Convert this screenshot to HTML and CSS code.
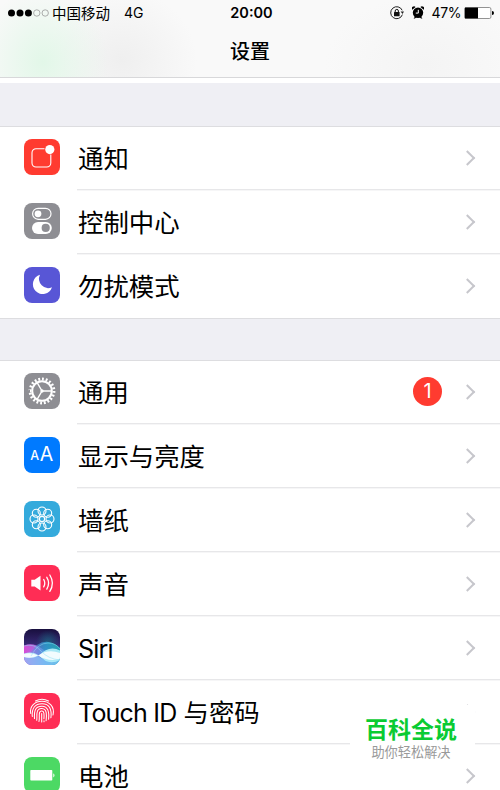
FILE: index.html
```html
<!DOCTYPE html>
<html lang="zh-CN">
<head>
  <meta charset="UTF-8">
  <title>设置</title>
  <link rel="stylesheet" href="styles.css">
</head>
<body>

  <header class="header">
    <div class="status">
      <div class="status-left">
        <svg class="signal" width="42" height="10" viewBox="0 0 42 10">
          <circle cx="3.5" cy="5" r="3.5"/>
          <circle cx="12" cy="5" r="3.5"/>
          <circle cx="20.4" cy="5" r="3.5"/>
          <circle class="off" cx="28.8" cy="5" r="3.2"/>
          <circle class="off" cx="37.2" cy="5" r="3.2"/>
        </svg>
        <span class="carrier">中国移动</span>
        <span>4G</span>
      </div>
      <div class="clock">20:00</div>
      <div class="status-right">
        <svg width="14" height="14" viewBox="0 0 14 14">
          <path d="M12.2 4.3A6 6 0 1 0 12.4 8.6" fill="none" stroke="#222" stroke-width="1"/>
          <path d="M10.6 5.6h3.4l-1.5 2.4z" fill="#222"/>
          <rect x="4" y="6" width="5.6" height="4.3" rx=".5" fill="#111"/>
          <path d="M5.2 6.2V5a1.6 1.6 0 0 1 3.2 0v1.2" fill="none" stroke="#111" stroke-width="1"/>
        </svg>
        <svg class="alarm" width="12" height="13" viewBox="0 0 12 13">
          <circle cx="6" cy="6.8" r="5.2"/>
          <path d="M.3 3.8A2.2 2.2 0 0 1 3.6.9zM11.7 3.8A2.2 2.2 0 0 0 8.4.9zM1.6 12.6l1.5-2.2 1.2.8-1.3 1.4zM10.4 12.6l-1.5-2.2-1.2.8L9 12.6z"/>
          <path d="M6.3 3.8v3.3H3.8" fill="none" stroke="#fff" stroke-width="1"/>
        </svg>
        <span class="percent">47%</span>
        <svg width="30" height="12" viewBox="0 0 30 12">
          <rect x=".5" y=".5" width="26.4" height="11" rx="1.5" fill="#fff" stroke="#777" stroke-width=".8"/>
          <path d="M1 .6h13v10.8H1z"/>
          <path d="M28 4a2 2 0 0 1 0 4z"/>
        </svg>
      </div>
    </div>
    <h1>设置</h1>
  </header>

  <ul class="group">
    <li class="row">
      <svg class="icon" viewBox="0 0 36 36">
        <rect width="36" height="36" rx="8" fill="#ff3b30"/>
        <path d="M20.5 9.7H12a4 4 0 0 0-4 4V24a4 4 0 0 0 4 4h10.8a4 4 0 0 0 4-4v-8.5" fill="none" stroke="#fff" stroke-width="1.1"/>
        <circle cx="25.8" cy="10.6" r="4.6" fill="#fff"/>
      </svg>
      <div class="cell"><span class="label">通知</span><i class="chevron"></i></div>
    </li>
    <li class="row">
      <svg class="icon" viewBox="0 0 36 36">
        <rect width="36" height="36" rx="8" fill="#8e8e93"/>
        <rect x="8.6" y="5.3" width="18.4" height="11" rx="5.5" fill="none" stroke="#fff" stroke-width="1.2"/>
        <circle cx="14" cy="10.8" r="3.4" fill="#fff"/>
        <rect x="8" y="18.9" width="19.8" height="12" rx="6" fill="#fff"/>
        <circle cx="21.7" cy="24.9" r="4.1" fill="#8e8e93"/>
      </svg>
      <div class="cell"><span class="label">控制中心</span><i class="chevron"></i></div>
    </li>
    <li class="row">
      <svg class="icon" viewBox="0 0 36 36">
        <rect width="36" height="36" rx="8" fill="#5856d6"/>
        <path d="M16 7.8A9.8 9.8 0 1 0 28 20.2 9.2 9.2 0 0 1 16 7.8z" fill="#fff"/>
      </svg>
      <div class="cell"><span class="label">勿扰模式</span><i class="chevron"></i></div>
    </li>
  </ul>

  <ul class="group">
    <li class="row">
      <svg class="icon" viewBox="0 0 36 36">
        <rect width="36" height="36" rx="8" fill="#8e8e93"/>
        <g fill="none" stroke="#fff">
          <circle cx="18" cy="18" r="9.8" stroke-width="2"/>
          <circle cx="18" cy="18" r="12" stroke-width="2.8" pathLength="40" stroke-dasharray="1 1"/>
          <path d="M18 18h10M18 18l-5-8.6M18 18l-5 8.6" stroke-width="1.4"/>
        </g>
        <circle cx="18" cy="18" r="1.7" fill="#fff"/>
      </svg>
      <div class="cell"><span class="label">通用</span><span class="badge">1</span><i class="chevron"></i></div>
    </li>
    <li class="row">
      <svg class="icon" viewBox="0 0 36 36">
        <rect width="36" height="36" rx="8" fill="#007aff"/>
        <text class="aa small" x="6.2" y="23.4" font-size="12.5">A</text>
        <text class="aa" x="15.8" y="24.4" font-size="19.5">A</text>
      </svg>
      <div class="cell"><span class="label">显示与亮度</span><i class="chevron"></i></div>
    </li>
    <li class="row">
      <svg class="icon" viewBox="0 0 36 36">
        <rect width="36" height="36" rx="8" fill="#34aadc"/>
        <g fill="none" stroke="#fff" stroke-width="1.1">
          <circle cx="18" cy="10" r="4"/>
          <circle cx="23.7" cy="12.3" r="4"/>
          <circle cx="26" cy="18" r="4"/>
          <circle cx="23.7" cy="23.7" r="4"/>
          <circle cx="18" cy="26" r="4"/>
          <circle cx="12.3" cy="23.7" r="4"/>
          <circle cx="10" cy="18" r="4"/>
          <circle cx="12.3" cy="12.3" r="4"/>
          <circle cx="18" cy="18" r="2.6"/>
        </g>
      </svg>
      <div class="cell"><span class="label">墙纸</span><i class="chevron"></i></div>
    </li>
    <li class="row">
      <svg class="icon" viewBox="0 0 36 36">
        <rect width="36" height="36" rx="8" fill="#ff2d55"/>
        <path d="M7.3 14.7h3.4l5.8-4v14.800l-5.800-4H7.300z" fill="#fff"/>
        <g fill="none" stroke="#fff" stroke-width="1.3" stroke-linecap="round">
          <path d="M19.7 14.5q2.2 3.7 0 7.4"/>
          <path d="M22.8 12.3q3.600 5.900 0 11.800"/>
          <path d="M25.800 10q5.200 8.200 0 16.400"/>
        </g>
      </svg>
      <div class="cell"><span class="label">声音</span><i class="chevron"></i></div>
    </li>
    <li class="row">
      <svg class="icon" viewBox="0 0 36 36">
        <defs>
          <linearGradient id="night" x1="0" y1="0" x2="0" y2="1">
            <stop offset="0" stop-color="#180f3e"/>
            <stop offset=".4" stop-color="#34266f"/>
            <stop offset=".7" stop-color="#4b67bd"/>
            <stop offset="1" stop-color="#5b9de4"/>
          </linearGradient>
          <linearGradient id="waveLeft" x1="0" y1="0" x2="1" y2="0">
            <stop offset="0" stop-color="#d84bd6"/>
            <stop offset=".6" stop-color="#9b8cf0" stop-opacity=".8"/>
            <stop offset="1" stop-color="#3f83dc" stop-opacity=".6"/>
          </linearGradient>
          <linearGradient id="waveRight" x1="0" y1="0" x2="1" y2="0">
            <stop offset="0" stop-color="#8f7fe8" stop-opacity=".5"/>
            <stop offset=".6" stop-color="#31a5dc"/>
            <stop offset="1" stop-color="#22c4bd"/>
          </linearGradient>
          <radialGradient id="teal" cx="24" cy="13" r="12" gradientUnits="userSpaceOnUse">
            <stop offset="0" stop-color="#19657f" stop-opacity=".8"/>
            <stop offset="1" stop-color="#19657f" stop-opacity="0"/>
          </radialGradient>
          <clipPath id="tile"><rect width="36" height="36" rx="8"/></clipPath>
        </defs>
        <g clip-path="url(#tile)">
          <path d="M0 0h36v36H0z" fill="url(#night)"/>
          <path d="M0 0h36v36H0z" fill="url(#teal)"/>
          <path d="M0 16.5Q9 13 17 19t19 12v5H0z" fill="url(#waveLeft)"/>
          <path d="M0 29Q8 22 13 16q11-8 23 3v17H0z" fill="url(#waveRight)" opacity=".75"/>
          <path d="M0 28q7 0 14-1 9 8 22 4v5H0z" fill="#8fc7fb" opacity=".65"/>
          <path d="M0 24.5Q9 22 15 26.5 25 16 36 21.500V31q-12 6-21-4.500Q9 30 0 28z" fill="#b5f0fb" opacity=".9"/>
          <path d="M0 25q7-2 14 1.500 10-7 22-2.500v6q-12 3-22-3.500Q7 30 0 28z" fill="#fff" opacity=".85"/>
          <path d="M0 17q10-3 17 5t19 9M7 27q7-13 17-13 8 0 12 6" fill="none" stroke="#8de1f4" stroke-width=".7" opacity=".7"/>
        </g>
      </svg>
      <div class="cell"><span class="label"><span class="latin">Siri</span></span><i class="chevron"></i></div>
    </li>
    <li class="row">
      <svg class="icon" viewBox="0 0 36 36">
        <rect width="36" height="36" rx="8" fill="#ff2d55"/>
        <g fill="none" stroke="#fff" stroke-width="1.05" stroke-linecap="round">
          <path d="M11.5 8q6.5-3.5 13 0"/>
          <path d="M6.7 20.5C5.3 13 11 8.3 18 8.3S31 13.5 29 22"/>
          <path d="M8.3 23.5C7.6 15 11 10.8 18 10.8c7.4 0 10 5.1 8.9 14"/>
          <path d="M10.5 25.6C10 17 11.5 13.2 18 13.2c5.8 0 7.4 5.4 6.6 13"/>
          <path d="M12.7 27.3c.5-3-.3-5.700.6-8.600 1.300-4.600 8-4.200 8.900 1 .5 3 .3 5-.1 8"/>
          <path d="M15 28.500c.8-3.500-.2-6.500.6-9 .8-2.200 4-1.900 4.300.8.3 2.700.2 4.500 0 5.500M17.700 20.500v8.500M20 27.800v1"/>
        </g>
      </svg>
      <div class="cell"><span class="label"><span class="latin">Touch ID</span> 与密码</span><i class="chevron"></i></div>
    </li>
    <li class="row row-cut">
      <svg class="icon" viewBox="0 0 36 36">
        <rect width="36" height="36" rx="8" fill="#4cd964"/>
        <rect x="6.3" y="13" width="22" height="10.6" rx=".8" fill="#fff"/>
        <path d="M29.3 16.2q2.4 2.1 0 4.200z" fill="#fff"/>
      </svg>
      <div class="cell"><span class="label">电池</span><i class="chevron"></i></div>
    </li>
  </ul>

  <div class="watermark">
    <strong>百科全说</strong>
    <span>助你轻松解决</span>
  </div>

</body>
</html>
```
FILE: styles.css
```css
* { box-sizing: border-box; }
body { margin: 0; height: 790px; overflow: hidden; position: relative; background: #efeff4; color: #000; font-family: Inter, "Noto Sans CJK SC", sans-serif; }

.header {
  height: 78px;
  border-bottom: 1px solid #d8d8da;
  box-shadow: 0 5px #fff;
  background:
    radial-gradient(ellipse 65px 75px at 43px 62px, #e2f7e8, rgba(226,247,232,0)),
    radial-gradient(ellipse 75px 70px at 122px 60px, #efefef, rgba(239,239,239,0)),
    radial-gradient(ellipse 100px 70px at 425px 65px, #f4f4f4, rgba(244,244,244,0)),
    #f9f9f9;
}
.status { display: grid; grid-template-columns: 1fr auto 1fr; align-items: center; height: 25px; padding: 0 6px 0 8px; font-size: 14px; }
.status-left, .status-right { display: flex; align-items: center; }
.status-right { justify-content: flex-end; }
.signal { margin-right: 2px; }
.signal .off { fill: none; stroke: #999; stroke-width: .8; }
.carrier { margin-right: 14px; font-size: 14.5px; }
.clock { padding-left: 1px; font-size: 14.5px; font-weight: 600; }
.alarm { margin: 0 7px 0 8px; }
.percent { margin-right: 3px; letter-spacing: -.4px; }
h1 { margin: 0; line-height: 54px; font-size: 20px; font-weight: 500; text-align: center; }

.group { list-style: none; margin: 0 0 42px; padding: 0; background: #fff; box-shadow: inset 0 1px #dddde0, 0 1px #dddde0; }
.group:last-of-type { margin-bottom: 0; }
.header + .group { margin-top: 48px; }
.row { display: flex; height: 64px; padding-left: 24px; }
.icon { flex: none; width: 36px; height: 36px; margin: 13px 17px 0 0; }
.cell { flex: 1; display: flex; align-items: center; padding-right: 27px; border-bottom: 1px solid #e7e7e9; box-shadow: 0 1px #f6f6f7; }
.row:last-child .cell { border-bottom-color: transparent; box-shadow: none; }
.row-cut { height: 46px; overflow: hidden; }
.row-cut .cell { height: 64px; }
.label { flex: 1; padding: 2px 0 0 1px; font-size: 25.4px; line-height: 38px; white-space: nowrap; }
.latin { font-size: 25px; letter-spacing: -.8px; }
.chevron { width: 11px; height: 11px; border: solid #c7c7cc; border-width: 2px 2px 0 0; transform: translateY(.5px) rotate(45deg); }
.badge { width: 29px; height: 29px; margin-right: 20px; border-radius: 50%; background: #ff3b30; color: #fff; font-size: 20px; line-height: 29px; text-align: center; }
.aa { fill: #fff; font-family: Inter, sans-serif; }
.aa.small { font-weight: 500; }

.watermark { position: absolute; left: 350px; top: 705px; width: 125px; height: 61px; background: #fff; text-align: center; }
.watermark strong { display: block; margin: 9px 3px 0 0; line-height: 32px; font-size: 23px; font-weight: 700; color: #0acb32; }
.watermark span { display: block; margin-right: 3px; line-height: 12px; font-size: 13.2px; color: #999; }
```
